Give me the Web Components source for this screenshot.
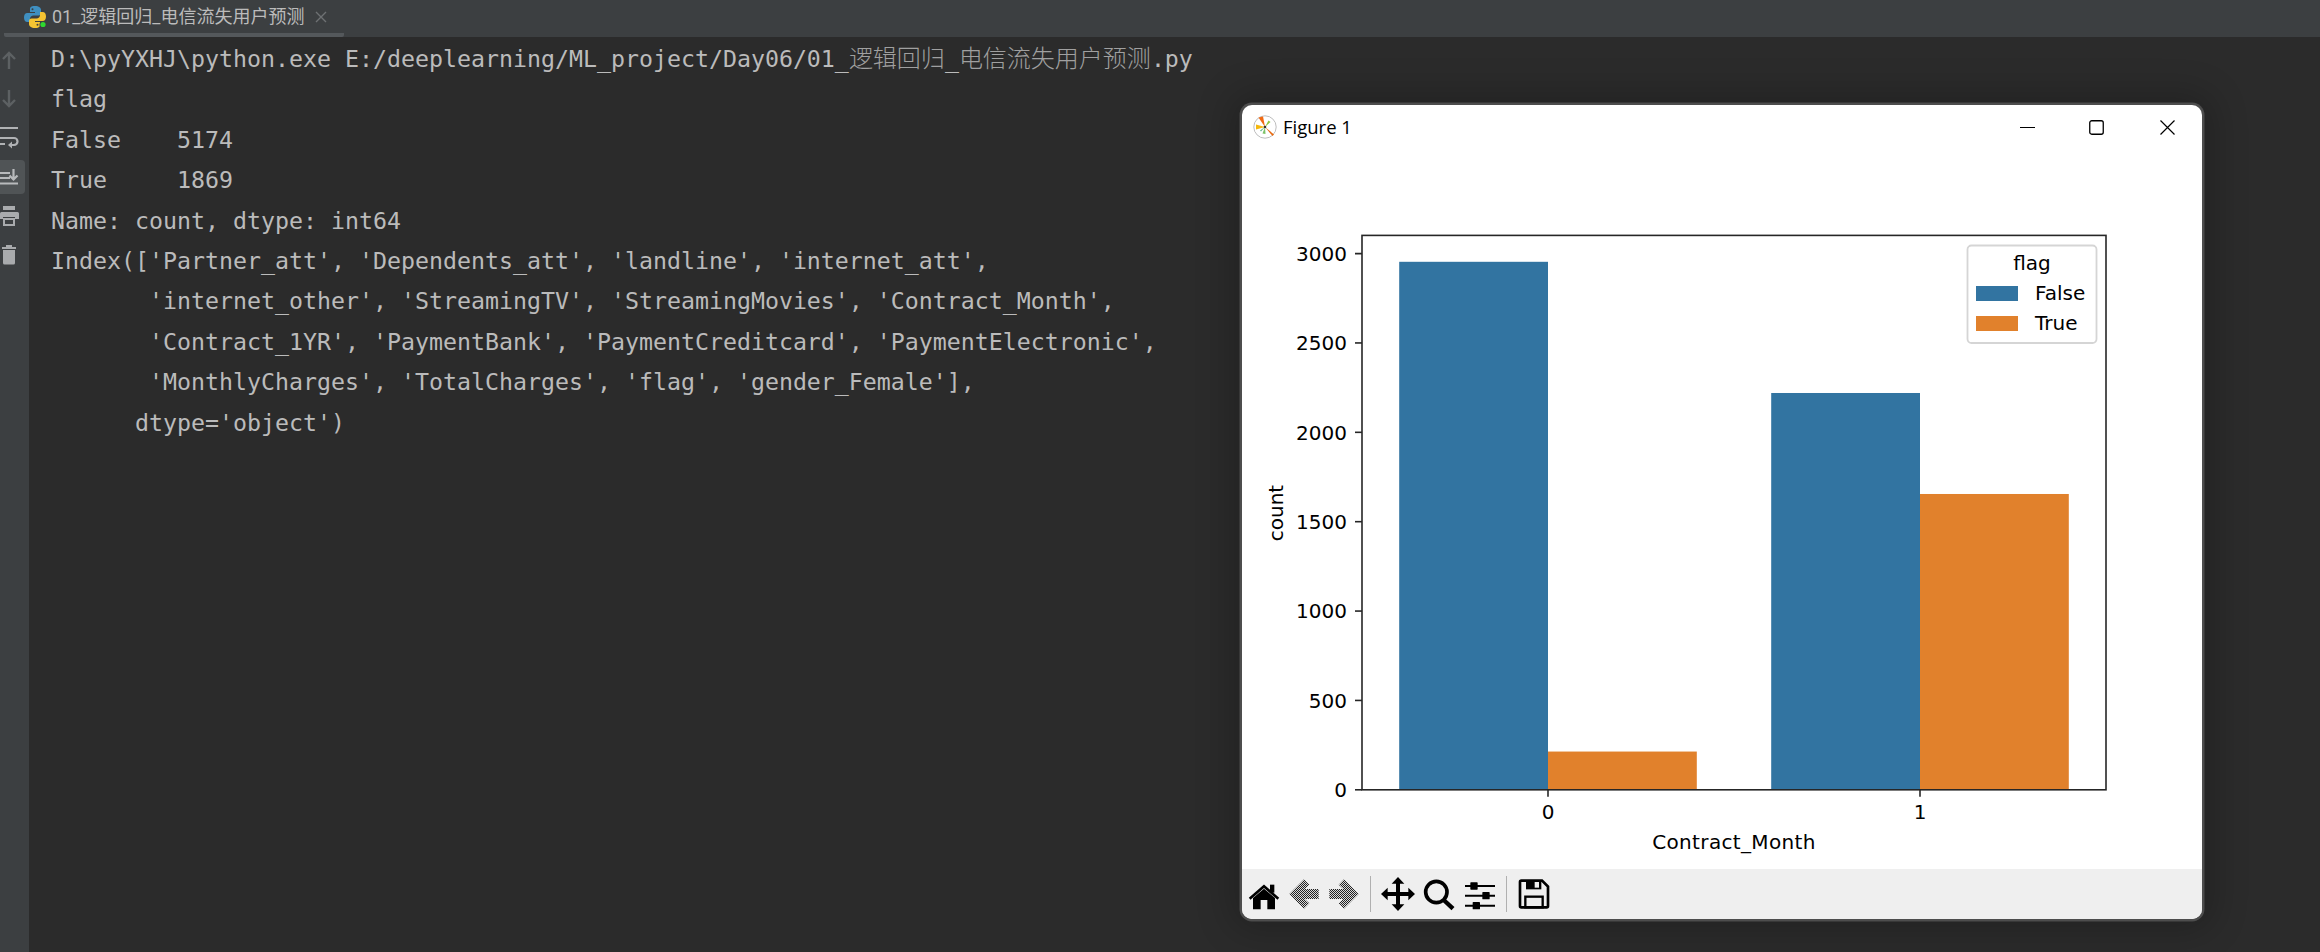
<!DOCTYPE html>
<html>
<head>
<meta charset="utf-8">
<title>PyCharm console</title>
<style>
    html, body { margin: 0; height: 100%; background: #2b2b2b; overflow: hidden; }
</style>
</head>
<body>
<ide-app>
    <ide-tab-bar slot="tabs" label="01_逻辑回归_电信流失用户预测"></ide-tab-bar>
    <tool-gutter slot="gutter"></tool-gutter>
    <console-view slot="console"></console-view>
    <figure-window slot="window" label="Figure 1">
        <count-chart></count-chart>
        <figure-toolbar slot="toolbar"></figure-toolbar>
    </figure-window>
</ide-app>

<script>
class IdeApp extends HTMLElement {
    constructor() {
        super();
        this.attachShadow({ mode: 'open' }).innerHTML = `
            <style>
                :host {
                    display: grid;
                    grid-template-columns: 29px 1fr;
                    grid-template-rows: 37px 1fr;
                    width: 2320px;
                    height: 952px;
                    position: relative;
                    background: #2b2b2b;
                    overflow: hidden;
                }
                ::slotted([slot="window"]) {
                    position: absolute;
                    left: 1242px;
                    top: 105px;
                }
            </style>
            <slot name="tabs"></slot>
            <slot name="gutter"></slot>
            <slot name="console"></slot>
            <slot name="window"></slot>
        `;
    }
}

class IdeTabBar extends HTMLElement {
    constructor() {
        super();
        this.attachShadow({ mode: 'open' }).innerHTML = `
            <style>
                :host {
                    display: block;
                    grid-column: 1 / 3;
                    height: 37px;
                    background: #3c3f41;
                    font: 18px "Roboto", "Noto Sans CJK SC", sans-serif;
                    color: #bbbbbb;
                }
                .tab {
                    display: flex;
                    align-items: center;
                    width: 340px;
                    height: 33px;
                    margin-left: 4px;
                    border-bottom: 4px solid #54585b;
                    border-radius: 0 0 2px 2px;
                }
                .py { margin-left: 19px; width: 24px; height: 24px; flex: none; }
                .label { margin-left: 5px; white-space: nowrap; line-height: 24px; }
                .close { margin-left: 11px; width: 12px; height: 12px; flex: none; }
            </style>
            <div class="tab">
                <svg class="py" viewBox="0 0 24 24">
                    <path fill="#3f8fc0" d="M12 1C7 1 7 3 7 5v2h5v1H4.500C2 8 1 10 1 12.500S2 17 4.500 17H7v-3c0-2 1.500-3.500 3.500-3.500h5c1.500 0 2.500-1 2.500-2.500V5c0-2-2-4-6-4z"/>
                    <path fill="#f5c432" d="M12 23c5 0 5-2 5-4v-2h-5v-1h7.500c2.500 0 3.500-2 3.500-4.500S22 7 19.500 7H17v3c0 2-1.500 3.500-3.500 3.500h-5C7 13.500 6 14.500 6 16v3c0 2 2 4 6 4z"/>
                    <circle cx="9.500" cy="4.200" r="1" fill="#3c3f41"/>
                    <circle cx="14.500" cy="19.800" r="1" fill="#3c3f41"/>
                    <circle cx="20" cy="19.500" r="3.500" fill="#3c3f41"/>
                    <circle cx="20" cy="19.500" r="2.600" fill="#2fd82f"/>
                </svg>
                <span class="label"></span>
                <svg class="close" viewBox="0 0 12 12"><path d="M1 1l10 10M11 1L1 11" stroke="#6e7173" stroke-width="1.400"/></svg>
            </div>
        `;
    }

    connectedCallback() {
        this.shadowRoot.querySelector('.label').textContent = this.getAttribute('label');
    }
}

class ToolGutter extends HTMLElement {
    constructor() {
        super();
        this.attachShadow({ mode: 'open' }).innerHTML = `
            <style>
                :host {
                    display: flex;
                    flex-direction: column;
                    padding-top: 3px;
                    background: #3c3f41;
                    box-sizing: border-box;
                    height: 915px;
                }
                .cell {
                    display: flex;
                    align-items: center;
                    width: 25px;
                    height: 39px;
                    flex: none;
                    position: relative;
                }
                .cell svg { display: block; width: 20px; height: 24px; position: relative; }
                .active::before {
                    content: "";
                    position: absolute;
                    left: 0;
                    right: 0;
                    top: 3px;
                    bottom: 2px;
                    background: #505456;
                    border-radius: 0 4px 4px 0;
                }
            </style>
            <div class="cell"><svg viewBox="0 0 20 24"><path d="M9 21V5M3 11l6-6 6 6" fill="none" stroke="#5d6163" stroke-width="2.400"/></svg></div>
            <div class="cell"><svg viewBox="0 0 20 24"><path d="M9 3v16M3 13l6 6 6-6" fill="none" stroke="#5d6163" stroke-width="2.400"/></svg></div>
            <div class="cell"><svg viewBox="0 0 20 24">
                <path d="M0 2h18M0 12h14a3.500 3.500 0 0 1 0 7h-4M0 18h5" fill="none" stroke="#b0b2b4" stroke-width="2.200"/>
                <path d="M12 15.500l-4 3.500 4 3.500z" fill="#b0b2b4"/>
            </svg></div>
            <div class="cell active"><svg viewBox="0 0 20 24">
                <path d="M0 8h10M0 13h10M0 18.500h18" fill="none" stroke="#b8babc" stroke-width="2.200"/>
                <path d="M13.500 4v10M9.500 10.500l4 4 4-4" fill="none" stroke="#b8babc" stroke-width="2.200"/>
            </svg></div>
            <div class="cell"><svg viewBox="0 0 20 24">
                <rect x="3" y="2" width="12" height="4" fill="#a9abad"/>
                <path d="M1.500 8h16a1.500 1.500 0 0 1 1.500 1.500V15h-4v-2H3v2H0V9.500A1.500 1.500 0 0 1 1.500 8z" fill="#a9abad"/>
                <rect x="4" y="15" width="10" height="6" fill="none" stroke="#a9abad" stroke-width="2"/>
            </svg></div>
            <div class="cell"><svg viewBox="0 0 20 24">
                <path d="M2 5h14M7 4V3h4v1" fill="none" stroke="#a9abad" stroke-width="2"/>
                <path d="M3 7h12v13a1.500 1.500 0 0 1-1.500 1.500h-9A1.500 1.500 0 0 1 3 20z" fill="#a9abad"/>
            </svg></div>
        `;
    }
}

class ConsoleView extends HTMLElement {
    constructor() {
        super();
        const lines = [
            `D:\\pyYXHJ\\python.exe E:/deeplearning/ML_project/Day06/01_<span class="cjk">逻辑回归</span>_<span class="cjk">电信流失用户预测</span>.py`,
            `flag`,
            `False    5174`,
            `True     1869`,
            `Name: count, dtype: int64`,
            `Index(['Partner_att', 'Dependents_att', 'landline', 'internet_att',`,
            `       'internet_other', 'StreamingTV', 'StreamingMovies', 'Contract_Month',`,
            `       'Contract_1YR', 'PaymentBank', 'PaymentCreditcard', 'PaymentElectronic',`,
            `       'MonthlyCharges', 'TotalCharges', 'flag', 'gender_Female'],`,
            `      dtype='object')`
        ];
        this.attachShadow({ mode: 'open' }).innerHTML = `
            <style>
                :host {
                    display: block;
                    background: #2b2b2b;
                    color: #bbbbbb;
                    padding: 2px 0 0 22px;
                    font: 23.250px/40.400px "DejaVu Sans Mono", monospace;
                    font-variant-ligatures: none;
                }
                .line { white-space: pre; height: 40.400px; }
                .cjk { font-family: "Noto Sans CJK SC", sans-serif; font-size: 24px; font-weight: 300; line-height: 30px; color: #a0a0a0; }
            </style>
            ${lines.map(l => `<div class="line">${l}</div>`).join('')}
        `;
    }
}

class FigureWindow extends HTMLElement {
    constructor() {
        super();
        this.attachShadow({ mode: 'open' }).innerHTML = `
            <style>
                :host {
                    display: flex;
                    flex-direction: column;
                    width: 960px;
                    height: 814px;
                    background: #fff;
                    border-radius: 10px;
                    overflow: hidden;
                    box-shadow: 0 0 0 2.500px #4d4d4d, 0 0 36px 10px rgba(0, 0, 0, .22);
                }
                .title {
                    display: flex;
                    align-items: center;
                    height: 44px;
                    flex: none;
                    color: #000;
                    font: 18.500px "Open Sans", "Noto Sans", sans-serif;
                }
                .logo { width: 24px; height: 24px; margin-left: 11px; flex: none; }
                .name { margin-left: 6px; flex: 1; position: relative; top: -1px; }
                .ctl { width: 15px; height: 15px; flex: none; }
                .min { margin-right: 54px; }
                .max { margin-right: 56px; }
                .cls { margin-right: 27px; }
                .body { flex: 1; display: block; min-height: 0; }
            </style>
            <div class="title">
                <svg class="logo" viewBox="0 0 24 24">
                    <circle cx="12" cy="12" r="11.200" fill="#fff" stroke="#bdbdbd" stroke-width="1"/>
                    <path d="M12 12L5.500 2.500 10 1.500z" fill="#f26a12"/>
                    <path d="M12 12L21 19.500 19.500 21z" fill="#e8690f"/>
                    <path d="M12 12L3 9.500 3 14.500z" fill="#f5b80c"/>
                    <path d="M12 12L15.500 5.500 17.500 7z" fill="#8dc63f"/>
                    <path d="M12 12L9.500 18.500 12.500 19z" fill="#7cc267"/>
                    <path d="M12 12L8 16.500 7 15.500z" fill="#5fb48c"/>
                    <circle cx="12" cy="12" r="1.300" fill="#333"/>
                </svg>
                <span class="name"></span>
                <svg class="ctl min" viewBox="0 0 15 15"><path d="M0 7.500h15" stroke="#000" stroke-width="1"/></svg>
                <svg class="ctl max" viewBox="0 0 15 15"><rect x=".75" y=".75" width="13.500" height="13.500" rx="2" fill="none" stroke="#000" stroke-width="1.300"/></svg>
                <svg class="ctl cls" viewBox="0 0 15 15"><path d="M.5.500l14 14M14.500.500l-14 14" stroke="#000" stroke-width="1.200"/></svg>
            </div>
            <div class="body"><slot></slot></div>
            <slot name="toolbar"></slot>
        `;
    }

    connectedCallback() {
        this.shadowRoot.querySelector('.name').textContent = this.getAttribute('label');
    }
}

class CountChart extends HTMLElement {
    constructor() {
        super();
        const left = 120, right = 864, top = 86.4, bottom = 640.8;
        const yScale = (bottom - top) / (2954 * 1.05);
        const y = v => bottom - v * yScale;
        const blue = '#3274a1', orange = '#e1812c';
        const bars = [
            [157.2, 2954, blue], [306, 214, orange],
            [529.2, 2220, blue], [678, 1655, orange]
        ];

        const barMarkup = bars.map(([x, v, c]) =>
            `<rect x="${x}" y="${y(v)}" width="148.8" height="${v * yScale}" fill="${c}"/>`).join('');
        const yTicks = [0, 500, 1000, 1500, 2000, 2500, 3000].map(v => `
            <line x1="113" x2="${left}" y1="${y(v)}" y2="${y(v)}"/>
            <text class="t" x="105" y="${y(v) + 7.300}" text-anchor="end">${v}</text>`).join('');
        const xTicks = [[306, 0], [678, 1]].map(([x, v]) => `
            <line x1="${x}" x2="${x}" y1="${bottom}" y2="${bottom + 7}"/>
            <text class="t" x="${x}" y="670" text-anchor="middle">${v}</text>`).join('');

        this.attachShadow({ mode: 'open' }).innerHTML = `
            <style>
                :host { display: block; width: 960px; height: 720px; }
                svg { display: block; }
                text { font: 20px "DejaVu Sans", sans-serif; fill: #000; }
                line { stroke: #262626; stroke-width: 1.600; }
            </style>
            <svg width="960" height="720" viewBox="0 0 960 720">
                ${barMarkup}
                <rect x="${left}" y="${top}" width="${right - left}" height="${bottom - top}" fill="none" stroke="#262626" stroke-width="1.600"/>
                ${yTicks}
                ${xTicks}
                <text x="492" y="700" text-anchor="middle" letter-spacing=".35">Contract_Month</text>
                <text transform="translate(41 364) rotate(-90)" text-anchor="middle">count</text>
                <rect x="725.500" y="96.500" width="129" height="97.500" rx="4" fill="#fff" fill-opacity=".8" stroke="#d5d5d5" stroke-width="1.800"/>
                <text x="790" y="121" text-anchor="middle">flag</text>
                <rect x="734" y="137" width="42" height="15" fill="${blue}"/>
                <text x="793" y="151">False</text>
                <rect x="734" y="167" width="42" height="15" fill="${orange}"/>
                <text x="793" y="181">True</text>
            </svg>
        `;
    }
}

class FigureToolbar extends HTMLElement {
    constructor() {
        super();
        this.attachShadow({ mode: 'open' }).innerHTML = `
            <style>
                :host {
                    display: flex;
                    align-items: center;
                    height: 50px;
                    flex: none;
                    padding-left: 2px;
                    background: #efefef;
                }
                .btn { width: 40px; height: 50px; display: flex; align-items: center; justify-content: center; flex: none; }
                .wide { width: 41px; }
                svg { width: 32px; height: 32px; display: block; flex: none; overflow: visible; }
                .sep { width: 1px; height: 36px; background: #b0b0b0; margin: 0 6px; flex: none; }
            </style>
            <div class="btn"><svg viewBox="0 0 96 96">
                <path d="M5 62L48 25 91 62" fill="none" stroke="#000" stroke-width="8"/>
                <rect x="66" y="20" width="13" height="24"/>
                <path d="M15 60L48 32 81 60V94H58V66H38V94H15z"/>
            </svg></div>
            <div class="btn"><svg viewBox="0 0 96 96">
                <defs><pattern id="dither" width="6" height="6" patternUnits="userSpaceOnUse">
                    <rect width="6" height="6" fill="#d8d8d8"/>
                    <rect width="3" height="3" fill="#222"/><rect x="3" y="3" width="3" height="3" fill="#222"/>
                </pattern></defs>
                <path d="M4 48L48 4 64 20 50 33H92V63H50L64 76 48 92z" fill="url(#dither)"/>
            </svg></div>
            <div class="btn"><svg viewBox="0 0 96 96">
                <path d="M92 48L48 4 32 20 46 33H4V63H46L32 76 48 92z" fill="url(#dither)"/>
            </svg></div>
            <div class="sep"></div>
            <div class="btn wide"><svg viewBox="0 0 96 96">
                <path d="M48 14V82M14 48H82" stroke="#000" stroke-width="12"/>
                <path d="M48 -3L67 17H29zM48 99L67 79H29zM-3 48L17 29V67zM99 48L79 29V67z"/>
            </svg></div>
            <div class="btn wide"><svg viewBox="0 0 96 96">
                <circle cx="40" cy="42" r="32" fill="none" stroke="#000" stroke-width="11"/>
                <path d="M62 66L90 92" stroke="#000" stroke-width="13"/>
            </svg></div>
            <div class="btn wide"><svg viewBox="0 0 96 96">
                <path d="M3 24H93M3 53H93M3 83H93" stroke="#000" stroke-width="6"/>
                <rect x="19" y="13" width="22" height="22" rx="2"/>
                <rect x="55" y="42" width="22" height="22" rx="2"/>
                <rect x="26" y="72" width="22" height="22" rx="2"/>
            </svg></div>
            <div class="sep"></div>
            <div class="btn wide"><svg viewBox="0 0 96 96">
                <path d="M10 8H72L90 26V84a4 4 0 0 1-4 4H10a4 4 0 0 1-4-4V12a4 4 0 0 1 4-4z" fill="none" stroke="#000" stroke-width="8"/>
                <path d="M24 8H70V34H24z"/>
                <rect x="50" y="12" width="13" height="17" fill="#efefef"/>
                <rect x="22" y="56" width="52" height="32" fill="none" stroke="#000" stroke-width="7"/>
            </svg></div>
        `;
    }
}

customElements.define('ide-app', IdeApp);
customElements.define('ide-tab-bar', IdeTabBar);
customElements.define('tool-gutter', ToolGutter);
customElements.define('console-view', ConsoleView);
customElements.define('figure-window', FigureWindow);
customElements.define('count-chart', CountChart);
customElements.define('figure-toolbar', FigureToolbar);
</script>
</body>
</html>
